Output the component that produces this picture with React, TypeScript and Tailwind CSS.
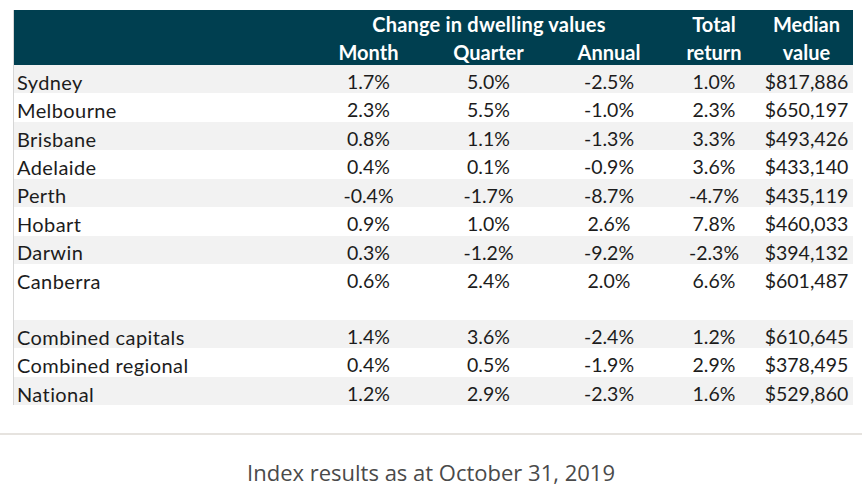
import React from 'react';

type Row = { name: string; month: string; quarter: string; annual: string; total: string; median: string; grey: boolean };

const rows: (Row | null)[] = [
    { name: 'Sydney', month: '1.7%', quarter: '5.0%', annual: '-2.5%', total: '1.0%', median: '$817,886', grey: true },
    { name: 'Melbourne', month: '2.3%', quarter: '5.5%', annual: '-1.0%', total: '2.3%', median: '$650,197', grey: false },
    { name: 'Brisbane', month: '0.8%', quarter: '1.1%', annual: '-1.3%', total: '3.3%', median: '$493,426', grey: true },
    { name: 'Adelaide', month: '0.4%', quarter: '0.1%', annual: '-0.9%', total: '3.6%', median: '$433,140', grey: false },
    { name: 'Perth', month: '-0.4%', quarter: '-1.7%', annual: '-8.7%', total: '-4.7%', median: '$435,119', grey: true },
    { name: 'Hobart', month: '0.9%', quarter: '1.0%', annual: '2.6%', total: '7.8%', median: '$460,033', grey: false },
    { name: 'Darwin', month: '0.3%', quarter: '-1.2%', annual: '-9.2%', total: '-2.3%', median: '$394,132', grey: true },
    { name: 'Canberra', month: '0.6%', quarter: '2.4%', annual: '2.0%', total: '6.6%', median: '$601,487', grey: false },
    null,
    { name: 'Combined capitals', month: '1.4%', quarter: '3.6%', annual: '-2.4%', total: '1.2%', median: '$610,645', grey: true },
    { name: 'Combined regional', month: '0.4%', quarter: '0.5%', annual: '-1.9%', total: '2.9%', median: '$378,495', grey: false },
    { name: 'National', month: '1.2%', quarter: '2.9%', annual: '-2.3%', total: '1.6%', median: '$529,860', grey: true },
];

const cols = 'grid grid-cols-[296px_117px_123px_118px_92px_93px]';

export default function App() {
    return (
        <div className="w-[862px] h-[498px] bg-white overflow-hidden">
            {/* Table */}
            <div className="ml-[13px] mt-[10px] w-[840px] border-l border-[#d6d6d6] font-['Lato',sans-serif] text-[19.5px] text-[#1c1c1c]">
                <div className={`${cols} bg-[#003f50] text-white font-bold text-[20px] h-[55px] leading-none`}>
                    <div className="row-span-2" />
                    <div className="col-span-3 flex items-center justify-center pt-[1px] tracking-[0.2px]">Change in dwelling values</div>
                    <div className="flex items-center justify-center pt-[1px]">Total</div>
                    <div className="flex items-center justify-center pt-[1px]">Median</div>
                    <div className="flex items-center justify-center pt-[2px]">Month</div>
                    <div className="flex items-center justify-center pt-[2px]">Quarter</div>
                    <div className="flex items-center justify-center pt-[2px]">Annual</div>
                    <div className="flex items-center justify-center pt-[2px]">return</div>
                    <div className="flex items-center justify-center pt-[2px]">value</div>
                </div>

                {rows.map((r, i) =>
                    r ? (
                        <div key={i} className={`${cols} h-[28.45px] pt-[5px] items-center leading-none ${r.grey ? 'bg-[#f2f2f2]' : 'bg-white'}`}>
                            <div className="pl-[3px] text-[20px] tracking-[0.4px]">{r.name}</div>
                            <div className="text-center">{r.month}</div>
                            <div className="text-center">{r.quarter}</div>
                            <div className="text-center">{r.annual}</div>
                            <div className="text-center">{r.total}</div>
                            <div className="text-center">{r.median}</div>
                        </div>
                    ) : (
                        <div key={i} className="h-[27.5px] bg-white" />
                    )
                )}
            </div>

            {/* Divider + caption */}
            <div className="mt-[28px] h-[2px] bg-[#e6e3df]" />
            <p className="mt-[26px] text-center font-['Open_Sans',sans-serif] text-[22px] text-[#4a4a4a] leading-none">
                Index results as at October 31, 2019
            </p>
        </div>
    );
}
